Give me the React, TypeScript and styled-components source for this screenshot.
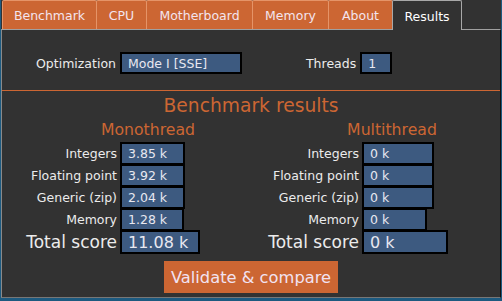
import React from "react";
import styled, { createGlobalStyle } from "styled-components";

const GlobalStyle = createGlobalStyle`
  html, body { margin: 0; padding: 0; background: #1d5a80; }
  body { font-family: "DejaVu Sans", Verdana, sans-serif; }
  * { box-sizing: border-box; }
`;

const Frame = styled.div`
  width: 502px;
  height: 301px;
  background: #1d5a80;
  padding: 0 1px 3px 1px;
  display: flex;
`;

const Window = styled.div`
  flex: 1;
  display: flex;
  flex-direction: column;
  background: #323232;
`;

const TabBar = styled.div`
  display: flex;
  height: 29px;
  padding-left: 1px;
  position: relative;
  z-index: 2;
`;

const Tab = styled.div<{ $active?: boolean; $w: number }>`
  width: ${(p) => p.$w}px;
  height: ${(p) => (p.$active ? "30px" : "29px")};
  margin-right: -1px;
  display: flex;
  align-items: center;
  justify-content: center;
  padding-top: 1px;
  font-size: 12.5px;
  color: ${(p) => (p.$active ? "#ffffff" : "#f3e4ee")};
  background: ${(p) => (p.$active ? "#323232" : "#cc6633")};
  border: 1px solid ${(p) => (p.$active ? "#a8a8a8" : "#e59468")};
  border-bottom: none;
  border-radius: 2px 2px 0 0;
`;

const Panel = styled.div`
  flex: 1;
  display: flex;
  flex-direction: column;
  border-top: 1px solid #a0a0a0;
  border-left: 1px solid #8a8a8a;
  border-right: 1px solid #111111;
  border-bottom: 1px solid #777777;
`;

const SettingsRow = styled.div`
  margin-top: 22px;
  height: 22px;
  display: flex;
  align-items: center;
  padding-left: 34px;
`;

const Label = styled.span<{ $gap?: number }>`
  font-size: 12.5px;
  color: #ececec;
  white-space: nowrap;
  margin-left: ${(p) => p.$gap ?? 0}px;
  margin-right: 4px;
`;

const Field = styled.div<{ $w: number }>`
  width: ${(p) => p.$w}px;
  height: 22px;
  border: 2px solid #000;
  background: #3d5a80;
  padding: 0 6px;
  display: flex;
  align-items: center;
  font-size: 12.5px;
  color: #e8e8f0;
`;

const Divider = styled.div`
  margin-top: 16px;
  height: 1px;
  background: #cc6633;
`;

const Heading = styled.div`
  margin-top: 4px;
  text-align: center;
  font-size: 18.7px;
  line-height: 22px;
  color: #cc6633;
`;

const SubHeadRow = styled.div`
  margin-top: 4px;
  display: grid;
  grid-template-columns: 292px 196px;
`;

const SubHead = styled.div`
  text-align: center;
  font-size: 15.7px;
  line-height: 18px;
  color: #cc6633;
`;

const ResultsGrid = styled.div`
  margin-top: 3px;
  display: grid;
  grid-template-columns: 115px 128px 108px 1fr;
  grid-template-rows: repeat(4, 22px) 24px;
  column-gap: 3px;
  grid-auto-flow: column;
`;

const RowLabel = styled.div<{ $big?: boolean }>`
  align-self: center;
  text-align: right;
  white-space: nowrap;
  font-size: ${(p) => (p.$big ? "17px" : "12.5px")};
  color: #ececec;
`;

const ValueBox = styled.div<{ $w: number; $big?: boolean }>`
  align-self: start;
  width: ${(p) => p.$w}px;
  height: ${(p) => (p.$big ? "24px" : "23px")};
  margin-bottom: -1px;
  border: 2px solid #000;
  background: #3d5a80;
  padding-left: 6px;
  display: flex;
  align-items: center;
  font-size: ${(p) => (p.$big ? "16px" : "12.5px")};
  color: #e8e8f0;
  white-space: nowrap;
`;

const ButtonRow = styled.div`
  margin-top: 7px;
  display: flex;
  justify-content: center;
`;

const Button = styled.button`
  height: 32px;
  padding: 0 7px;
  border: none;
  background: #cc6633;
  color: #f1e2f1;
  font-family: "DejaVu Sans", Verdana, sans-serif;
  font-size: 16.3px;
  cursor: pointer;
`;

const tabs = [
  { name: "Benchmark", w: 95 },
  { name: "CPU", w: 51 },
  { name: "Motherboard", w: 107 },
  { name: "Memory", w: 77 },
  { name: "About", w: 65 },
  { name: "Results", w: 70 },
];

type Row = { label: string; value: string; w: number; big?: boolean };

const mono: Row[] = [
  { label: "Integers", value: "3.85 k", w: 65 },
  { label: "Floating point", value: "3.92 k", w: 65 },
  { label: "Generic (zip)", value: "2.04 k", w: 65 },
  { label: "Memory", value: "1.28 k", w: 64 },
  { label: "Total score", value: "11.08 k", w: 80, big: true },
];

const multi: Row[] = [
  { label: "Integers", value: "0 k", w: 72 },
  { label: "Floating point", value: "0 k", w: 72 },
  { label: "Generic (zip)", value: "0 k", w: 72 },
  { label: "Memory", value: "0 k", w: 65 },
  { label: "Total score", value: "0 k", w: 86, big: true },
];

function Column({ rows }: { rows: Row[] }) {
  return (
    <>
      {rows.map((r) => (
        <RowLabel key={"l" + r.label} $big={r.big}>
          {r.label}
        </RowLabel>
      ))}
      {rows.map((r) => (
        <ValueBox key={"v" + r.label} $w={r.w} $big={r.big}>
          {r.value}
        </ValueBox>
      ))}
    </>
  );
}

export default function App() {
  return (
    <>
      <GlobalStyle />
      <Frame>
        <Window>
          <TabBar>
            {tabs.map((t) => (
              <Tab key={t.name} $w={t.w} $active={t.name === "Results"}>
                {t.name}
              </Tab>
            ))}
          </TabBar>
          <Panel>
            <SettingsRow>
              <Label>Optimization</Label>
              <Field $w={122}>Mode I [SSE]</Field>
              <Label $gap={64}>Threads</Label>
              <Field $w={32}>1</Field>
            </SettingsRow>
            <Divider />
            <Heading>Benchmark results</Heading>
            <SubHeadRow>
              <SubHead>Monothread</SubHead>
              <SubHead>Multithread</SubHead>
            </SubHeadRow>
            <ResultsGrid>
              <Column rows={mono} />
              <Column rows={multi} />
            </ResultsGrid>
            <ButtonRow>
              <Button>Validate &amp; compare</Button>
            </ButtonRow>
          </Panel>
        </Window>
      </Frame>
    </>
  );
}
